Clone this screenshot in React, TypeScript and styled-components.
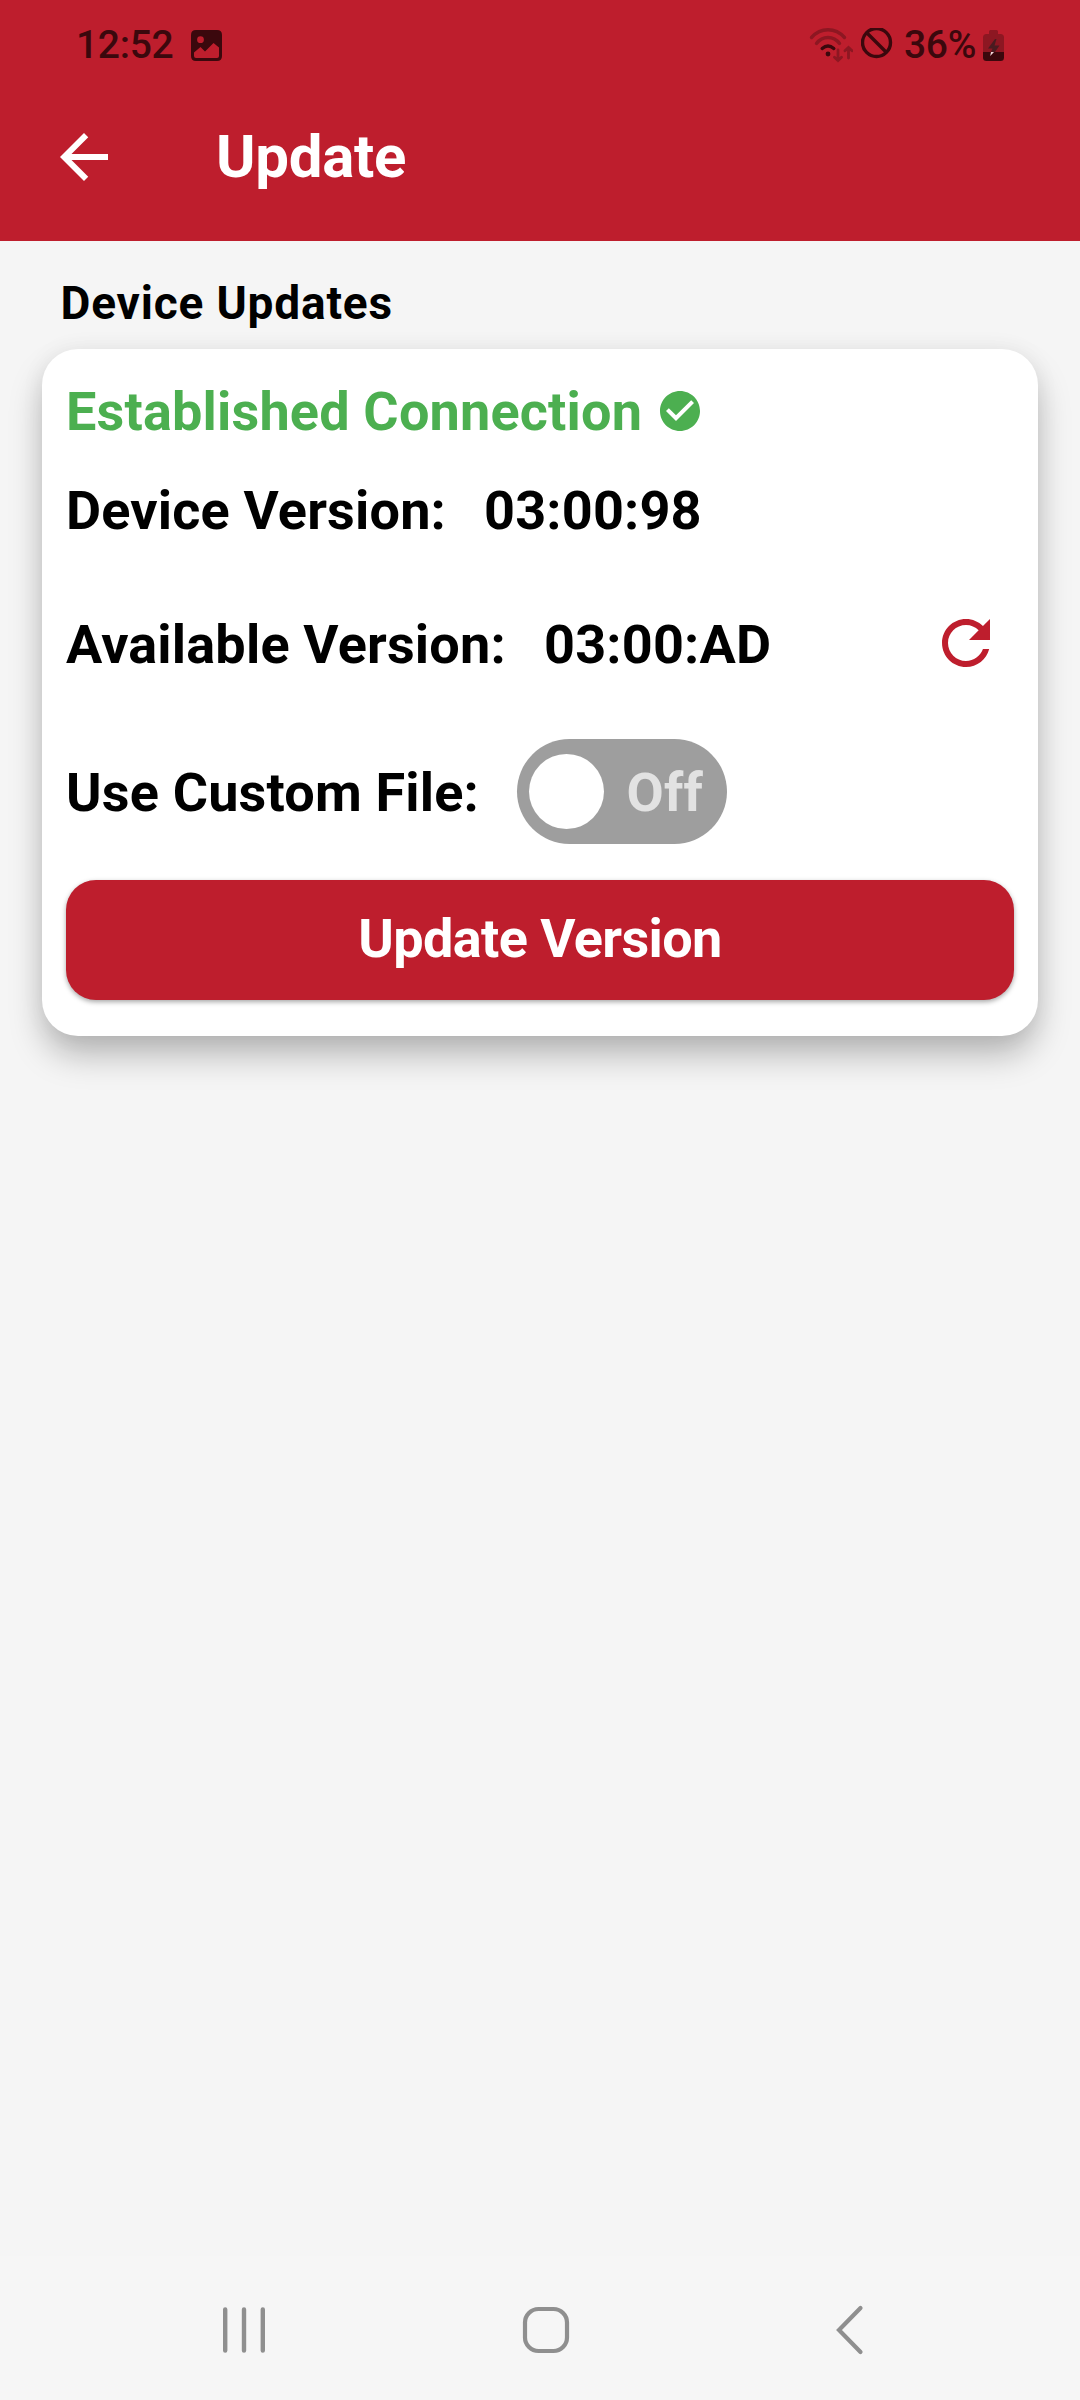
import React from "react";
import styled, { createGlobalStyle } from "styled-components";

const RED = "#be1e2d";
const INK = "#3b080d";
const GREEN = "#4caf50";

const GlobalStyle = createGlobalStyle`
  body { margin: 0; background: #f5f5f5; }
  * { box-sizing: border-box; }
`;

const Screen = styled.div`
  width: 1080px;
  height: 2400px;
  display: flex;
  flex-direction: column;
  background: #f5f5f5;
  font-family: Roboto, "Liberation Sans", sans-serif;
  color: #000;
`;

const Header = styled.header`
  height: 241px;
  background: ${RED};
  display: flex;
  flex-direction: column;
`;

const StatusBar = styled.div`
  height: 73px;
  padding: 17px 76px 0 76px;
  display: flex;
  justify-content: space-between;
  align-items: flex-start;
  color: ${INK};
`;

const StatusGroup = styled.div`
  height: 56px;
  display: flex;
  align-items: center;
`;

const StatusText = styled.span<{ $width: number; $gap?: number }>`
  width: ${(p) => p.$width}px;
  margin-left: ${(p) => p.$gap ?? 0}px;
  flex: none;
  font-size: 39px;
  font-weight: 500;
  line-height: 56px;
  letter-spacing: -0.3px;
  white-space: nowrap;
`;

const Icon = styled.svg<{ $gap?: number }>`
  display: block;
  flex: none;
  margin-left: ${(p) => p.$gap ?? 0}px;
`;

const AppBar = styled.div`
  height: 168px;
  padding-left: 48px;
  display: flex;
  align-items: center;
  color: #fff;
`;

const BackButton = styled.button`
  width: 72px;
  height: 72px;
  padding: 0;
  border: 0;
  background: none;
`;

const Title = styled.h1`
  margin: 0 0 0 96px;
  font-size: 60px;
  font-weight: 700;
  line-height: 72px;
  letter-spacing: -0.3px;
`;

const Main = styled.main`
  flex: 1;
  padding: 0 42px;
`;

const SectionTitle = styled.h2`
  margin: 0;
  padding: 34px 0 0 18.5px;
  height: 108px;
  font-size: 46px;
  font-weight: 700;
  line-height: 56px;
  letter-spacing: 0.82px;
`;

const Card = styled.section`
  height: 687px;
  padding: 23px 24px 36px;
  border-radius: 36px;
  background: #fff;
  display: flex;
  flex-direction: column;
  box-shadow: 0 20px 34px -2px rgba(0, 0, 0, 0.27), 0 0 24px rgba(0, 0, 0, 0.05);
`;

const Row = styled.div<{ $height: number }>`
  height: ${(p) => p.$height}px;
  display: flex;
  align-items: center;
`;

const Label = styled.span<{ $color?: string; $width?: number }>`
  width: ${(p) => (p.$width ? `${p.$width}px` : "auto")};
  padding-top: 2px;
  color: ${(p) => p.$color ?? "#000"};
  font-size: 54px;
  font-weight: 700;
  line-height: 64px;
  letter-spacing: 0.18px;
  white-space: nowrap;
`;

const RefreshButton = styled.button`
  width: 72px;
  height: 72px;
  margin: -1px 12px 0 auto;
  padding: 0;
  border: 0;
  background: none;
`;

const Toggle = styled.div`
  width: 210px;
  height: 105px;
  padding: 0 24px 0 12px;
  border-radius: 53px;
  background: #9e9e9e;
  display: flex;
  align-items: center;
  justify-content: space-between;
`;

const Thumb = styled.div`
  width: 75px;
  height: 75px;
  border-radius: 50%;
  background: #fff;
`;

const UpdateButton = styled.button`
  height: 120px;
  margin-top: auto;
  padding: 0 0 2px;
  border: 0;
  border-radius: 30px;
  background: ${RED};
  color: #fff;
  font: 700 54px/64px Roboto, sans-serif;
  letter-spacing: -0.6px;
  box-shadow: 0 2px 5px rgba(0, 0, 0, 0.35);
`;

const NavBar = styled.nav`
  height: 144px;
  padding: 4px 0 0 213px;
  background: #f6f6f6;
  display: flex;
  align-items: center;
`;

export default function App() {
  return (
    <Screen>
      <GlobalStyle />
      <Header>
        <StatusBar>
          <StatusGroup>
            <StatusText $width={115}>12:52</StatusText>
            <Icon width="31" height="31" viewBox="0 0 31 31">
              <path
                fill={INK}
                fillRule="evenodd"
                d="M5 0H26Q31 0 31 5V26Q31 31 26 31H5Q0 31 0 26V5Q0 0 5 0ZM9.5 6.3A3.4 3.4 0 1 0 9.5 13.1A3.4 3.4 0 1 0 9.5 6.3ZM3 22.5V26Q3 28 5 28H26Q28 28 28 26V17.5L22.5 13L14 21.5L9.5 17Z"
              />
            </Icon>
          </StatusGroup>
          <StatusGroup>
            <Icon width="44" height="36" viewBox="0 0 44 36" fill="none" strokeLinecap="round" strokeWidth="3.4">
              <g stroke="#8d1722">
                <path d="M2.500 10.500Q9.500 2.800 19 2.800T35.500 10.500" />
                <path d="M7.500 16.500Q12 10.500 19 10.500T30.500 16.500" />
                <path strokeWidth="2.800" d="M29 23V33.500M25.500 30.200L29 33.500L32.500 30.200M39.500 31V20.500M36 23.800L39.500 20.500L43 23.800" />
              </g>
              <path stroke={INK} d="M13.200 21.500Q19 16.500 24.800 21.500" />
              <circle cx="19" cy="27" r="2.400" fill={INK} />
            </Icon>
            <Icon $gap={8} width="32" height="34" viewBox="0 0 32 34" fill="none" stroke={INK} strokeWidth="3.400">
              <circle cx="15.500" cy="14.500" r="14" />
              <path d="M5.500 4.500L25.500 24.500" />
            </Icon>
            <StatusText $gap={11} $width={79}>36%</StatusText>
            <Icon width="21" height="31" viewBox="0 0 21 31">
              <path fill="#8d1722" d="M6 4V1.500Q6 0 7.500 0H13.500Q15 0 15 1.500V4H17.500Q21 4 21 7.500V22H0V7.500Q0 4 3.500 4Z" />
              <path fill={INK} d="M0 22H21V27.500Q21 31 17.500 31H3.500Q0 31 0 27.500Z" />
              <path fill="#4a1b20" d="M12 9L5 18.500H9.500L8 22H12L16.500 15.500H11.500L13.500 9Z" />
              <path fill="#f3dadd" d="M8 22H11L7.200 26Z" />
            </Icon>
          </StatusGroup>
        </StatusBar>
        <AppBar>
          <BackButton aria-label="Back">
            <Icon width="72" height="72" viewBox="0 0 24 24" fill="#fff">
              <path d="M20 11H7.830l5.590-5.590L12 4l-8 8 8 8 1.410-1.410L7.830 13H20v-2z" />
            </Icon>
          </BackButton>
          <Title>Update</Title>
        </AppBar>
      </Header>
      <Main>
        <SectionTitle>Device Updates</SectionTitle>
        <Card>
          <Row $height={78}>
            <Label $color={GREEN} $width={590}>Established Connection</Label>
            <Icon width="48" height="48" viewBox="0 0 24 24" fill={GREEN}>
              <path d="M12 2C6.480 2 2 6.480 2 12s4.480 10 10 10 10-4.480 10-10S17.520 2 12 2zm-2 15l-5-5 1.410-1.410L10 14.170l7.590-7.590L19 8l-9 9z" />
            </Icon>
          </Row>
          <Row $height={120}>
            <Label $width={418}>Device Version:</Label>
            <Label>03:00:98</Label>
          </Row>
          <Row $height={147}>
            <Label $width={478}>Available Version:</Label>
            <Label>03:00:AD</Label>
            <RefreshButton aria-label="Refresh">
              <Icon width="72" height="72" viewBox="0 0 24 24" fill={RED}>
                <path d="M17.650 6.350C16.200 4.900 14.210 4 12 4c-4.420 0-7.990 3.580-7.990 8s3.570 8 7.990 8c3.730 0 6.840-2.550 7.730-6h-2.080c-.820 2.330-3.040 4-5.650 4-3.310 0-6-2.690-6-6s2.690-6 6-6c1.660 0 3.140.690 4.220 1.780L13 11h7V4l-2.350 2.350z" />
              </Icon>
            </RefreshButton>
          </Row>
          <Row $height={149}>
            <Label $width={451}>Use Custom File:</Label>
            <Toggle role="switch" aria-checked="false">
              <Thumb />
              <Label $color="#e2e2e2">Off</Label>
            </Toggle>
          </Row>
          <UpdateButton>Update Version</UpdateButton>
        </Card>
      </Main>
      <NavBar>
        <Icon width="62" height="60" viewBox="0 0 62 60" stroke="#8f8f8f" strokeWidth="4.400" strokeLinecap="round">
          <path d="M12.200 9.400V50.600M31 9.400V50.600M49.800 9.400V50.600" />
        </Icon>
        <Icon $gap={241} width="60" height="60" viewBox="0 0 60 60" fill="none" stroke="#8f8f8f" strokeWidth="4.200">
          <rect x="9" y="9" width="42" height="42" rx="13.500" />
        </Icon>
        <Icon $gap={256} width="40" height="60" viewBox="0 0 40 60" fill="none" stroke="#8f8f8f" strokeWidth="4.200" strokeLinecap="round">
          <path d="M28.500 8L7 30L28.500 52" />
        </Icon>
      </NavBar>
    </Screen>
  );
}
